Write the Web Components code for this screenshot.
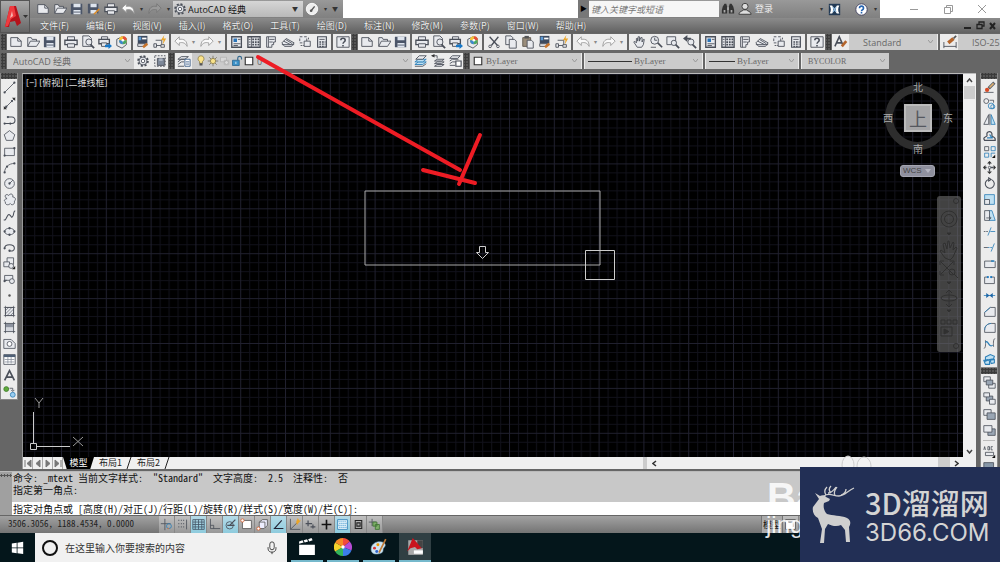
<!DOCTYPE html>
<html lang="zh-CN">
<head>
<meta charset="utf-8">
<title>AutoCAD 经典</title>
<style>
  body {
    margin: 0; height: 100vh; display: flex; flex-direction: column; position: relative;
    overflow: hidden; background: #666;
    font: 9px/12px "Open Sans", "Noto Sans CJK SC", sans-serif; color: #222;
  }
  .row { flex: none; display: flex; align-items: stretch; height: 16px; margin-top: 1px; overflow: hidden; }
  .row + .row { margin-top: 3px; }
  .row > * { flex: none; }
  .work { flex: 1; display: flex; margin-top: 4px; min-height: 0; }
  .left, .right { display: flex; flex-direction: column; }
  .left { width: 18px; }
  .right { width: 18px; margin: 0 2px 0 4px; overflow: hidden; }
  .view { flex: 1; margin-left: 4px; min-width: 0; display: flex; flex-direction: column; border-top: 1px solid #bbb; border-left: 1px solid #999; }
</style>
</head>
<body>
<cad-header></cad-header>

<div class="row">
  <cad-toolbar items="new open save | print preview plot publish | match block | undo v redo v | props center palettes sheet markup calc | help"></cad-toolbar>
  <cad-toolbar items="new open save | print preview plot publish | cut copy paste match block | undo v redo v | pan zoomrt zoomwin zoomprev | props center palettes sheet markup calc | help"></cad-toolbar>
  <cad-toolbar items="textstyle"></cad-toolbar>
  <cad-select label="文字样式" value="Standard" size="88" pad="12"></cad-select>
  <cad-toolbar plain items="| dimstyle"></cad-toolbar>
  <cad-select label="标注样式" value="ISO-25" size="88" pad="12"></cad-select>
</div>

<div class="row">
  <cad-toolbar items=""></cad-toolbar>
  <cad-select label="工作空间" value="AutoCAD 经典" size="127" pad="4"></cad-select>
  <cad-toolbar plain items="gear wsave"></cad-toolbar>
  <cad-toolbar items="layers"></cad-toolbar>
  <cad-select label="图层" value="0" size="220" pad="3"><cad-icon name="bulb"></cad-icon><cad-icon name="sun"></cad-icon><cad-icon name="freeze"></cad-icon><cad-icon name="lock"></cad-icon><cad-icon name="swatch"></cad-icon></cad-select>
  <cad-toolbar plain items="layer1 layer2 layer3"></cad-toolbar>
  <cad-toolbar items=""></cad-toolbar>
  <cad-select serif label="颜色" value="ByLayer" size="111" pad="2"><cad-icon name="swatch"></cad-icon></cad-select>
  <cad-toolbar plain items="|"></cad-toolbar>
  <cad-select serif label="线型" value="ByLayer" size="117" pad="3"><cad-icon name="line44"></cad-icon></cad-select>
  <cad-toolbar plain items="|"></cad-toolbar>
  <cad-select serif label="线宽" value="ByLayer" size="92" pad="3"><cad-icon name="line26"></cad-icon></cad-select>
  <cad-toolbar plain items="|"></cad-toolbar>
  <cad-select serif small label="打印样式" value="BYCOLOR" size="87" pad="4"></cad-select>
</div>

<div class="work">
  <div class="left">
    <cad-palette items="line xline pline polygon rect arc circle cloud spline ellipse earc insert mkblock point hatch gradient region table mtext addsel"></cad-palette>
  </div>
  <div class="view">
    <cad-viewport></cad-viewport>
    <cad-tabs></cad-tabs>
  </div>
  <div class="right">
    <cad-palette items="erase copyo mirror offset array move rotate scale stretch trim extend breakp break join chamfer fillet blend explode"></cad-palette>
    <cad-palette items="front back above under - textfront hatchback"></cad-palette>
  </div>
</div>

<cad-command></cad-command>
<cad-status></cad-status>
<win-taskbar></win-taskbar>
<red-arrow></red-arrow>
<site-mark></site-mark>

<script>
const K = 'stroke="#4a4f59" fill="none"';
const P = 'stroke="#4a4f59" fill="#e8eaee"';
const B = 'stroke="#2c7fb8" fill="none"';
const BF = 'stroke="#2c7fb8" fill="#bfe0f2"';
const node = (x, y, c = '#4a4f59') => `<circle cx="${x}" cy="${y}" r="1.4" fill="${c}"/>`;
const ICONS = {
  new: `<path ${P} d="M2 3h8l4 4v6H2z"/><path ${K} d="M10 3v4h4"/>`,
  open: `<path ${P} d="M2 13V3h4l1 2h5v2"/><path ${P} d="M2 13l3-6h11l-4 6z"/>`,
  save: `<path fill="#4b5568" d="M1 2h13v12H1z"/><path fill="#dfe5ee" d="M4 2h8v4H4zM4 9h8v5H4z"/><path stroke="#4b5568" d="M4 11.500h8"/>`,
  saveas: `<path fill="#4b5568" d="M1 2h12v11H1z"/><path fill="#dfe5ee" d="M4 2h7v4H4zM4 9h7v4H4z"/><path stroke="#d98b2b" stroke-width="2" d="M8 14l6-6"/>`,
  print: `<path ${P} d="M4 2h8v4H4z"/><path ${P} stroke-width="1.500" d="M1 6h14v5H1z"/><path ${P} d="M4 10h8v4H4z"/>`,
  preview: `<path ${P} d="M2 1h7l3 3v9H2z"/><circle cx="9" cy="8" r="3.500" ${P}/><path ${K} stroke-width="2" d="M11 11l4 4"/>`,
  plot: `<path ${P} d="M4 2h7v3H4z"/><path ${P} stroke-width="1.500" d="M1 5h12v5H1z"/><path ${P} d="M4 9h6v4H4z"/><path fill="#1878c8" d="M8 11h4V9l4 3.500L12 16v-2H8z"/>`,
  publish: `<path ${P} d="M2 5l6-3 5 2v7l-5 4-6-3z"/><circle cx="9" cy="6" r="4.500" fill="#f4c63a"/><path fill="#e2503e" d="M9 6V1.500A4.500 4.500 0 0 1 13.500 6z"/><path fill="#48a868" d="M9 6h4.500A4.500 4.500 0 0 1 9 10.500z"/><path fill="#3a87cf" d="M9 6v4.500A4.500 4.500 0 0 1 4.500 6z"/><circle cx="9" cy="6" r="1.500" fill="#fff"/>`,
  match: `<path fill="#3d4a5e" d="M2 1h11v9H2z"/><path fill="#fff" d="M7 3h5v2H7z"/><path fill="#5d9bd5" d="M3 2h3v4H3z"/><path ${P} d="M2 10h8v3H2z"/><path stroke="#c8742c" stroke-width="3" d="M8 14l5-4"/>`,
  block: `<path ${K} d="M3 6h7v5M1 12h9"/><path ${P} d="M1 10h3v4H1zM9 11h4v3H9z"/><path fill="#eaa52a" d="M13 0L9 6h3l-1 5 4-7h-3z"/>`,
  undo: `<path stroke="#999" fill="#fafafa" d="M1 7l5-5v3c6-1 9 2 9 8-2-4-5-5-9-4v3z"/>`,
  redo: `<path stroke="#999" fill="#fafafa" d="M15 7l-5-5v3C4 4 1 7 1 13c2-4 5-5 9-4v3z"/>`,
  redodim: `<path stroke="#777" fill="#999" d="M15 7l-5-5v3C4 4 1 7 1 13c2-4 5-5 9-4v3z"/>`,
  props: `<path ${P} stroke-width="1.500" d="M2 2h11v12H2z"/><path fill="#2a74b8" d="M4 4h4v4H4z"/><path ${K} d="M9 5h3M4 10h8M4 12h5"/>`,
  center: `<path ${P} stroke-width="1.500" d="M1 2h14v12H1z"/><path ${K} stroke-dasharray="2 1" stroke-width="2" d="M6 5h8M6 8h8M6 11h8"/><path ${K} d="M5 2v12M2 5h2M2 8h2M2 11h2"/>`,
  palettes: `<path ${P} d="M3 2h10v6h-2v3H9v3H3z"/><path ${K} d="M5 2v12M6 5h6M6 8h4"/>`,
  sheet: `<path ${P} d="M1 9l5-5 9 5-3 4H4z"/><path ${K} d="M3 7l8 4M5 5l8 5M1 11h14"/>`,
  markup: `<path ${P} stroke-dasharray="3 2" d="M2 2h8v7H2z"/><path ${P} d="M7 7h7v6H7z"/><path ${K} stroke-dasharray="2 1" d="M3 12h4M12 3v3"/>`,
  calc: `<path ${P} stroke-width="1.300" d="M3 2h10v12H3z"/><path ${K} d="M5 5h6"/><path ${K} stroke-width="1.500" stroke-dasharray="2 1" d="M5 8h7M5 10.500h7M5 13h7"/>`,
  help: `<path ${P} d="M1 2h14v12H1z"/><path ${K} stroke-width="1.800" d="M5.500 6c0-3 5-3 5 0 0 2-2.500 2-2.500 4M8 11.500v1.500"/>`,
  cut: `<path ${K} stroke-width="1.500" d="M3 2l9 10M13 2L5 12"/><circle cx="3.500" cy="13" r="1.500" ${K}/><circle cx="12.500" cy="13" r="1.500" ${K}/>`,
  copy: `<path ${P} d="M2 1h6l2 2v8H2z"/><path ${P} d="M6 5h6l2 2v8H6z"/>`,
  paste: `<path fill="#9a8d7b" stroke="#5d564c" d="M2 3h9v10H2z"/><path fill="#555" d="M4 1h5v3H4z"/><path ${P} d="M7 6h5l2 2v7H7z"/>`,
  pan: `<path ${P} d="M6 14L2 8l1-1 2 2V4h1.500v3L7 2h1.500v5L10 3h1.500v5L13 5h1l-1 6-2 3z"/>`,
  zoomrt: `<circle cx="6.500" cy="6" r="4.500" ${P}/><path ${K} stroke-width="2" d="M10 9l5 5"/><path ${K} d="M6.500 3v3h3M2 14h6"/>`,
  zoomwin: `<path ${P} d="M1 2h10v9H1z"/><circle cx="9" cy="9" r="3" ${P}/><path ${K} stroke-width="2" d="M11 11l4 4"/>`,
  zoomprev: `<circle cx="9" cy="8" r="3.500" ${P}/><path ${K} stroke-width="2" d="M11 11l4 4"/><path fill="#4a4f59" d="M0 4l5-4v3h4v2H5v3z"/>`,
  textstyle: `<path ${K} stroke="#333" stroke-width="1.800" d="M1 13L6 2l4 9M3 9h6"/><path stroke="#b4652c" stroke-width="3" d="M9 13l5-6"/>`,
  dimstyle: `<path ${K} d="M1 8v7M15 8v7M1 13h14"/><path stroke="#b4652c" stroke-width="4" d="M6 9l6-5"/><path stroke="#555" stroke-width="2" d="M12 4l3-3"/>`,
  gear: `<circle cx="8" cy="8" r="5.500" ${K} stroke-width="2.200" stroke-dasharray="2.300 2"/><circle cx="8" cy="8" r="4.500" ${P}/><circle cx="8" cy="8" r="2" stroke="#4a4f59" fill="#fff"/>`,
  wsave: `<path ${K} stroke-dasharray="2 1.500" d="M2 2h12v12H2z"/><path fill="#7d8899" stroke="#4a4f59" d="M5 5h8v8H5z"/><path fill="#aab2c0" d="M7 5h4v3H7z"/>`,
  layers: `<path ${P} d="M1 6l4-3h8l-4 3zM1 9l4-3h5M1 12l4-3h3M1 14h7"/><path fill="#fff" stroke="#3a5d88" d="M9 6h6v8H9z"/><path stroke="#3a5d88" d="M10 9h4M10 11.500h4"/>`,
  bulb: `<path fill="#fbe38a" stroke="#8a7a43" d="M8 1a4 4 0 0 1 2 7.500V11H6V8.500A4 4 0 0 1 8 1z"/><path fill="#555" d="M6 11h4v3H6z"/>`,
  sun: `<path stroke="#6f6a55" d="M8 1v14M1 8h14M3 3l10 10M13 3L3 13"/><circle cx="8" cy="8" r="3.500" fill="#f8e28a" stroke="#8a7a43"/>`,
  freeze: `<path stroke="#b0b0b0" fill="#d8d8d8" d="M2 3h8v6H2zM7 7h6v6H7z"/><circle cx="10" cy="10" r="2.500" fill="#ddd" stroke="#aaa"/>`,
  lock: `<path fill="#3c92c9" stroke="#24618c" d="M2 7h9v7H2z"/><path fill="none" stroke="#34688d" stroke-width="1.500" d="M9 7V4c0-3 5-3 5 0v2"/><path stroke="#fff" d="M6.500 9v3"/>`,
  swatch: `<path fill="#fff" stroke="#333" stroke-width="1.500" d="M3 3h10v10H3z"/>`,
  layer1: `<path ${BF} d="M1 12l4-3h9l-4 3z"/><path ${BF} d="M1 9l4-3h9l-4 3z"/><path ${P} d="M2 6l4-4h8l-4 4z"/><path ${K} d="M1 14h9l4-3"/>`,
  layer2: `<path ${P} d="M4 8l3-2h8l-3 2zM4 11l3-2h8l-3 2zM4 14l3-2h8l-3 2z"/><path ${K} d="M1 2h6v3"/><path fill="#333" d="M0 2l4-2v4z"/>`,
  layer3: `<path ${P} d="M2 5l3-3h9l-3 3zM2 8l3-2h7M2 11l3-2h4M2 13h6"/><path fill="#fff" stroke="#4a4f59" stroke-width="1.300" d="M9 8h6v6H9z"/>`,
  line: `<path ${K} d="M2 14L14 2"/>${node(2,14)}${node(14,2)}`,
  xline: `<path ${K} d="M1 15L15 1"/>${node(4,12)}${node(11,5)}<path fill="#333" d="M15 1v4l-4-4zM1 15v-4l4 4z"/>`,
  pline: `<path ${K} stroke-width="1.300" d="M2 13h9c5 0 5-8 0-8H6"/>${node(2,13)}${node(9,13)}${node(6,5)}`,
  polygon: `<path ${P} d="M8 2l6.500 5-2.500 7H4L1.500 7z"/>`,
  rect: `<path ${P} d="M2 4h12v9H2z"/>${node(2,13)}${node(14,4)}`,
  arc: `<path ${K} d="M2 14C2 8 7 3 14 3"/>${node(2,14)}${node(5,7)}${node(14,3)}`,
  circle: `<circle cx="8" cy="8" r="6" ${P}/><path ${K} d="M8 8l4-4"/>${node(8,8)}`,
  cloud: `<path ${P} d="M5 7C0 4 4 0 7 3c2-3 6-2 5 2 4 0 4 4 2 5 1 4-3 6-5 3-3 3-7 1-6-2-3-2 0-4 2-4z"/>`,
  spline: `<path ${K} stroke-width="1.300" d="M1 13C4 16 5 5 8 7s2 5 4 2 0-5 3-7"/>`,
  ellipse: `<ellipse cx="8" cy="8" rx="6" ry="4" ${P}/>${node(2,8)}${node(14,8)}${node(8,4)}${node(8,12)}`,
  earc: `<path ${K} stroke-width="1.300" d="M2 9c0-6 12-6 12 0 0 3-3 4-6 3"/>${node(2,9)}${node(8,12)}`,
  insert: `<path ${P} d="M5 1h8v8H5z"/><path ${P} d="M1 6h7v6H1z"/><circle cx="10" cy="11" r="3" ${P}/><path fill="#222" d="M15 11v4h-4z"/>`,
  mkblock: `<path ${P} d="M2 3h10v6H2zM1 9h4"/><circle cx="11" cy="10" r="3" ${P}/>${node(2,10)}`,
  point: `<circle cx="8" cy="8" r="1.500" fill="#555"/>`,
  hatch: `<path ${P} d="M3 3h10v10H3z"/><path ${K} stroke-width=".800" d="M3 7l4-4M3 11l8-8M5 13l8-8M9 13l4-4M1 3h14M1 13h14M3 1v14M13 1v14"/>`,
  gradient: `<path fill="#8c929e" d="M3 3h10v5H3z"/><path fill="#d5d8de" d="M3 8h10v5H3z"/><path ${K} d="M1 3h14M1 13h14M3 1v14M13 1v14"/>`,
  region: `<path ${P} d="M1 3h9l5 5v6H1z"/><circle cx="8" cy="8.500" r="3" stroke="#4a4f59" fill="#fff"/>`,
  table: `<path fill="#fff" stroke="#4a4f59" d="M1 2h14v12H1z"/><path fill="#4f6076" d="M1 2h14v3H1z"/><path stroke="#8b929e" d="M2 8h12M2 11h12M6 5v8M10 5v8"/>`,
  mtext: `<path ${K} stroke="#333" stroke-width="2" d="M2 14L8 2l6 12M4 10h8"/>`,
  addsel: `<circle cx="4" cy="5" r="3" fill="#5faa3c" stroke="#3a7a22"/><circle cx="12" cy="12" r="3" fill="#9bcdf0" stroke="#2c7fb8"/><path ${K} d="M8 4h4v3M10 6l2 2 2-2"/>`,
  erase: `<path ${K} d="M1 14h12"/><path stroke="#5a606b" stroke-width="4" d="M7 9l7-7"/><path stroke="#e0b070" stroke-width="2" d="M8 8l5-5"/><circle cx="5" cy="11" r="2.600" fill="#d84b26"/>`,
  copyo: `<circle cx="4" cy="5" r="3" ${K}/><circle cx="10" cy="11" r="3.500" ${B}/><circle cx="12" cy="12" r="2.500" ${B}/><path ${K} d="M8 4h5v3"/>`,
  mirror: `<path ${P} d="M7 2v12H1z"/><path ${BF} d="M10 2v12h5z"/><path ${K} d="M8.500 1v14"/>`,
  offset: `<path ${K} stroke-width="1.500" d="M2 14h13v-2c-1-3-4-2-4-4 1-7-8-6-6 0 0 2-4 1-4 4z"/><path ${B} stroke-width="1.500" d="M5 11h7c-3-1-3-4-4-4"/>`,
  array: `<path ${K} d="M2 2h5v5H2z"/><path ${B} d="M10 2h5v5h-5zM2 10h5v5H2zM15 10h-5v5"/><path fill="#111" d="M15 12v4h-4z"/>`,
  move: `<path ${K} stroke-width="1.600" stroke-dasharray="3.500 5" d="M8 1v15M1 8h15"/><path fill="#333" d="M8 0l3 3H5zM8 16l-3-3h6zM0 8l3-3v6zM16 8l-3 3V5z"/><circle cx="8" cy="8" r="1.500" ${K}/>`,
  rotate: `<path ${K} stroke-width="1.300" d="M7 3a5.500 5.500 0 1 0 4 .500M7 1v4l3-2z"/>`,
  scale: `<path ${BF} d="M2 2h12v12H2z"/><path ${P} d="M2 8h6v6H2z"/>`,
  stretch: `<path ${BF} d="M7 2h4l4 12H7z"/><path ${P} d="M2 2h6v12H2z"/><path ${K} d="M4 11h5M8 9l2 2-2 2"/>`,
  trim: `<path ${K} stroke-dasharray="2 1" d="M1 8h5"/><path ${B} d="M6 13l4-10M9 8h6"/>`,
  extend: `<path ${K} d="M1 8h5"/><path ${B} d="M10 13l4-10"/><path ${B} stroke-dasharray="2 1" d="M6 8h6"/>`,
  breakp: `<path ${P} d="M12 5H2v8h13V5"/><path ${B} stroke-width="2" d="M10 5h4"/>`,
  break: `<path ${P} d="M6 5H2v8h12V5h-4"/>${node(6,5,'#1c78c0')}${node(10,5,'#1c78c0')}`,
  join: `<path ${B} d="M1 8h14"/><path fill="#1c66a8" d="M8 8L4 5v6zM8 8l4-3v6z"/>`,
  chamfer: `<path ${P} d="M2 14V9l7-6h6v11z"/><path ${B} d="M2 9l7-6"/>`,
  fillet: `<path ${P} d="M2 14v-3c0-5 4-8 8-8h5v11z"/><path ${B} d="M2 11c0-5 4-8 8-8"/>`,
  blend: `<path ${K} d="M1 14c3 0 2-8 2-10M15 2c-3 0-2 8-2 10"/><path ${B} stroke-width="1.500" d="M3 7c3-5 4 7 9 3"/>`,
  explode: `<path ${BF} stroke-width="1.300" d="M3 5l6-3 5 2-1 3-5 1-5 2zM1 9l5-1 2 2v4H3zM9 9l5-1v4l-4 1z"/>`,
  front: `<path ${P} d="M1 1h8v6H1zM7 9h8v6H7z"/><path fill="#9aa6b4" stroke="#4a4f59" d="M4 5h8v6H4z"/>`,
  back: `<path fill="#9aa6b4" stroke="#4a4f59" d="M4 5h8v6H4z"/><path ${P} d="M1 1h7v5H1zM8 9h7v6H8z"/>`,
  above: `<path ${P} d="M1 2h9v7H1z"/><path fill="#9aa6b4" stroke="#4a4f59" d="M5 6h10v8H5z"/>`,
  under: `<path fill="#9aa6b4" stroke="#4a4f59" d="M6 6h9v8H6z"/><path ${P} d="M1 2h10v8H1z"/>`,
  textfront: `<path ${K} stroke="#222" d="M1 6l1-4 1 4M6 2h2v4H6zM12 2h-2v4h2"/><path ${P} d="M3 9h10v4H3z"/><path fill="#111" d="M15 12v4h-4z"/>`,
  hatchback: `<path fill="#8797a8" stroke="#4a4f59" d="M1 2h12v10H1z"/>`,
  find: `<path fill="#333" d="M2 5l2-3h2l1 3v8H1V9zM14 5l-2-3h-2L9 5v8h6V9z"/><path fill="#aaa" d="M3 9h2v3H3zM11 9h2v3h-2zM7 6h2v3H7z"/>`,
  user: `<circle cx="8" cy="5" r="3.500" fill="#ddd" stroke="#333"/><path fill="#ddd" stroke="#333" d="M1 14c1-4 4-3 5-5h4c1 2 4 1 5 5z"/>`,
  exchange: `<path fill="#223a55" d="M1 1h14v14H1z"/><path fill="#fff" d="M2 3h3c2 2 2 8 0 10H2c2-3 2-7 0-10zM14 3h-3c-2 2-2 8 0 10h3c-2-3-2-7 0-10z"/><path stroke="#8fb9dd" stroke-width="1.500" d="M6 5l4 6M10 5l-4 6"/>`,
  qhelp: `<circle cx="8" cy="8" r="7" fill="#fff" stroke="#335"/><path fill="none" stroke="#2463b0" stroke-width="2" d="M5.500 6.500c0-3.500 5-3.500 5 0 0 2-2.500 1.500-2.500 3.500M8 11.200v1.800"/>`,
  dial: `<circle cx="8" cy="8" r="6.500" fill="#eee" stroke="#fff"/><path stroke="#555" stroke-width="1.500" d="M7 10l4-5"/><circle cx="7" cy="10" r="1.500" fill="#555"/>`,
  s1: `<path ${K} d="M6 1v14M1 7h12"/><circle cx="11" cy="10" r="3" ${B}/><path stroke="#e07030" d="M9 13h2"/>`,
  s2: `<path ${K} stroke-dasharray="1 2" stroke-width="1.500" d="M3 3h8M3 7h8M3 11h8"/><path ${K} d="M13 2v12"/>`,
  s3: `<path stroke="#445566" fill="none" d="M1 2h14v12H1zM1 5h14M1 8h14M1 11h14M4 2v12M8 2v12M12 2v12"/>`,
  s4: `<path ${K} d="M3 1v12h12M3 9h4v4"/>`,
  s5: `<circle cx="7" cy="9" r="4.500" ${K}/><path ${K} stroke-width="1.500" d="M7 9l7-7M4 9h9"/>`,
  s6: `<path fill="#fff" stroke="#555" d="M3 3h11v10H3z"/><circle cx="3" cy="3" r="2" fill="#fff" stroke="#d65f2d"/>`,
  s7: `<path fill="#eef" stroke="#555" d="M4 5l4-3h6v7l-4 4H4zM4 5h7v7"/><circle cx="3" cy="13" r="2" fill="#fff" stroke="#d65f2d"/>`,
  s8: `<path stroke="#223" fill="none" stroke-width="1.300" d="M12 3L3 13h11"/>`,
  s9: `<path ${K} d="M3 1v13h12M3 14l8-8"/><path fill="#eaa52a" d="M12 0l2 3 2 0-3 3-2 3-1-4z"/>`,
  s10: `<path ${K} stroke="#222" stroke-width="1.500" d="M5 3v7M2 7h8M8 11h6M11 8v5"/>`,
  s11: `<path stroke="#111" stroke-width="2" d="M8 2v12M2 8h12"/>`,
  s12: `<path fill="#eaf6fc" stroke="#2c7fb8" d="M2 2h12v12H2z"/><path stroke="#62a9d6" stroke-dasharray="1.500 1" stroke-width="1.500" d="M3 4h10M4 6.500h10M3 9h10M4 11.500h10"/>`,
  s13: `<path fill="none" stroke="#222" stroke-width="1.300" d="M4 3h8v10H4zM6 6h4v4H6z"/>`,
  s14: `<path ${K} d="M5 1v9M1 5h9"/><path fill="#7fb069" stroke="#3d7032" d="M6 5h5v5H6zM9 8h5v6H9z"/>`,
  s15: `<path fill="#fff" stroke="#444" d="M2 2h12v12H2z"/><path ${K} d="M5 5h6v6"/>`,
  win: `<path fill="#fff" d="M1 3l6-1v6H1zM8 2l7-1v7H8zM1 9h6v6l-6-1zM8 9h7v7l-7-1z"/>`,
  mic: `<rect x="5.500" y="1" width="5" height="9" rx="2.500" fill="none" stroke="#333"/><path fill="none" stroke="#333" d="M3.500 7v2c0 5 9 5 9 0V7M8 12.500V15"/>`,
  clap: `<path fill="#fff" d="M1 6h14v9H1zM1 3l3-1 1 2-4 1zM5 2l3-1 1 2-3 1zM9 1l3-1 1 2-3 1z"/>`,
  wheel: `<path fill="#f14b3c" d="M8 8V0a8 8 0 0 1 6 3z"/><path fill="#b84bd6" d="M8 8l6-5a8 8 0 0 1 1.500 8z"/><path fill="#3b7dea" d="M8 8l7.500 3A8 8 0 0 1 8 16z"/><path fill="#33b45a" d="M8 8v8a8 8 0 0 1-7-4z"/><path fill="#f5d32c" d="M8 8l-7 4a8 8 0 0 1 0-8z"/><path fill="#f58a26" d="M8 8L1 4a8 8 0 0 1 7-4z"/><circle cx="8" cy="8" r="1.500" fill="#fff"/>`,
  paint: `<path fill="#cfe5f2" stroke="#7aa5c0" stroke-width=".500" d="M1 10c0-6 7-8 11-6 3 2 1 4 0 5s1 4-4 5-7-1-7-4z"/><circle cx="4" cy="9" r="1.300" fill="#d33"/><circle cx="7" cy="6" r="1.300" fill="#e90"/><circle cx="6" cy="12" r="1.300" fill="#36c"/><path stroke="#c07a35" stroke-width="1.500" d="M8 13l6-12"/>`,
  acad: `<path fill="#aaa" d="M2 2h13v13H2z"/><path fill="#444" d="M10 2h5v7h-5z"/><path fill="#c9151e" d="M1 12L6 0l8 9-4 1-2-2-4 1z"/><path fill="#fff" d="M7 11h8v3H7z"/>`
};

const svg = (name, w, h = w) => {
  if (name.startsWith('line') && name.length > 4) {
    const n = name.slice(4);
    return `<svg width="${n}" height="12" viewBox="0 0 ${n} 12" aria-hidden="true"><path stroke="#333" d="M0 6.500h${n}"/></svg>`;
  }
  return `<svg width="${w}" height="${h}" viewBox="0 0 16 16" aria-hidden="true">${ICONS[name] || ''}</svg>`;
};

function define(tag, render) {
  customElements.define(tag, class extends HTMLElement {
    connectedCallback() {
      if (this.shadowRoot) return;
      const t = document.createElement('template');
      t.innerHTML = render(this);
      this.attachShadow({ mode: 'open' }).append(t.content.cloneNode(true));
    }
  });
}

const RESET = `
  button { all: unset; box-sizing: border-box; display: flex; align-items: center; justify-content: center; }
  svg { display: block; flex: none; }
  *, *::before { box-sizing: border-box; }`;

define('cad-icon', el => `<style>:host{display:block;flex:none}${RESET}</style>${svg(el.getAttribute('name'), +(el.getAttribute('size') || 12))}`);

define('cad-toolbar', el => {
  const items = (el.getAttribute('items') || '').split(' ').filter(Boolean);
  return `<style>
    :host { display: flex; background: #ececec; }
    ${RESET}
    button { width: 17px; }
    .v { width: 9px; font-size: 6px; color: #888; }
    .sep { width: 4px; border-left: 1px solid #ececec; border-right: 1px solid #ececec; background: #666; }
    .grip { width: 7px; background: #555; border: solid #666; border-width: 0 1px; background-image: radial-gradient(#3c3c3c 50%, transparent 50%); background-size: 3px 3px; }
  </style>${el.hasAttribute('plain') ? '' : '<div class="grip"></div>'}` +
  items.map(n => n === '|' ? '<div class="sep"></div>' : n === 'v' ? '<button class="v" aria-label="更多">▾</button>'
    : `<button aria-label="${n}">${svg(n, 14)}</button>`).join('');
});

define('cad-select', el => {
  const v = el.getAttribute('value'), s = el.hasAttribute('serif');
  const f = s ? (el.hasAttribute('small') ? '8px "Liberation Serif"' : '9px "Liberation Serif"') : '9px "Open Sans"';
  return `<style>
    :host { display: flex; align-items: center; background: #cbcbcb; width: ${el.getAttribute('size')}px; padding: 0 4px 0 ${el.getAttribute('pad')}px; box-sizing: border-box; overflow: hidden; }
    ${RESET}
    select { appearance: none; border: 0; background: none; flex: 1; min-width: 0; padding: 0 0 0 2px; margin: 0; color: #686868; font: ${f}, "Noto Sans CJK SC", sans-serif; }
  </style><slot></slot><select aria-label="${el.getAttribute('label')}"><option>${v}</option></select>
  <svg width="5" height="4" viewBox="0 0 5 4"><path d="M0 0l2.500 3L5 0" fill="none" stroke="#999"/></svg>`;
});

define('cad-header', () => {
  const menus = ['文件(F)', '编辑(E)', '视图(V)', '插入(I)', '格式(O)', '工具(T)', '绘图(D)', '标注(N)', '修改(M)', '参数(P)', '窗口(W)', '帮助(H)'];
  const q = n => `<button class="q" aria-label="${n}">${svg(n, 14)}</button>`;
  return `<style>
    :host { flex: none; display: grid; grid-template: 18px 15px / 30px minmax(0, 1fr); background: linear-gradient(#909090, #787878 54%, #8a8a8a 56%, #616161); }
    ${RESET}
    .app { grid-row: 1 / 3; background: linear-gradient(#aaa, #666); border: 1px solid #555; }
    .title { display: flex; align-items: stretch; background: #fff; }
    .bar { display: flex; align-items: center; background: linear-gradient(#999, #808080); flex: none; }
    .qat { width: 313px; padding-left: 4px; }
    .q { width: 17px; height: 16px; flex: none; }
    .a { width: 10px; font-size: 6px; color: #333; flex: none; }
    .ws { width: 130px; height: 16px; display: flex; align-items: center; background: linear-gradient(#d6d6d6, #b9b9b9); padding: 0 3px 0 0; flex: none; }
    .ws select { appearance: none; border: 0; background: none; padding: 0; margin: 0 auto 0 1px; color: #111; font: 9px "Open Sans", "Noto Sans CJK SC", sans-serif; width: 102px; }
    .info { width: 302px; margin-left: 235px; }
    .play { width: 11px; height: 18px; background: #777; font-size: 7px; color: #000; }
    input { width: 130px; height: 16px; border: 0; border-radius: 0; padding: 0 2px; background: #f6f6f6; font: italic 9px "Noto Sans CJK SC", sans-serif; flex: none; }
    input::placeholder { color: #777; opacity: 1; }
    .login { color: #eee; margin: 0 auto 0 2px; }
    .wc { margin-left: auto; display: flex; padding-right: 1px; }
    .wc button { width: 34px; }
    nav { display: flex; align-items: center; gap: 17px; padding-left: 10px; font: 9px/14px "Noto Sans CJK SC", sans-serif; color: #eee; text-shadow: 0 0 1px #333; }
    nav a { color: inherit; text-decoration: none; white-space: nowrap; }
    .mdi { margin-left: auto; display: flex; padding-right: 2px; }
    .mdi button { width: 12px; }
  </style>
  <button class="app" aria-label="应用程序菜单"><svg width="28" height="30" viewBox="0 0 28 30"><path fill="#b5121b" d="M4 25L9 4h6l5 17-4 3-2-5-5 1-1 5z"/><path fill="#ef3b3f" d="M9 4h4l2 10-5 3-3 7-3 1z"/><path fill="#f6b5b0" d="M11 9l1 5-3 2z"/><path fill="#333" d="M22 13h5l-2.500 3z"/></svg></button>
  <div class="title">
    <div class="bar qat">${['new', 'open', 'save', 'saveas', 'print', 'undo'].map(q).join('')}<button class="a">▾</button>${q('redodim')}<button class="a">▾</button>
      <div class="ws">${svg('gear', 14)}<select aria-label="工作空间"><option>AutoCAD 经典</option></select><button class="a">▼</button></div>
      ${q('dial')}<button class="a">▾</button><button class="a">▼</button></div>
    <div class="bar info"><button class="play" aria-label="展开">▶</button><input aria-label="搜索" placeholder="键入关键字或短语">
      <button class="q">${svg('find', 14)}</button><button class="q">${svg('user', 14)}</button><span class="login">登录</span><button class="a">▾</button><button class="q">${svg('exchange', 13)}</button><button class="a"></button><button class="q">${svg('qhelp', 13)}</button><button class="a">▾</button></div>
    <div class="wc">
      <button aria-label="最小化"><svg width="8" height="8"><path d="M0 4.500h8" stroke="#999"/></svg></button>
      <button aria-label="还原"><svg width="9" height="9"><path d="M.500 2.500h6v6h-6zM2.500 2V.500h6v6H7" fill="none" stroke="#999"/></svg></button>
      <button aria-label="关闭"><svg width="8" height="8"><path d="M0 0l8 8M8 0L0 8" stroke="#999"/></svg></button>
    </div>
  </div>
  <nav>${menus.map(m => `<a href="#">${m}</a>`).join('')}
    <div class="mdi">
      <button aria-label="最小化窗口"><svg width="8" height="8"><path d="M0 6h7" stroke="#222" stroke-width="2"/></svg></button>
      <button aria-label="还原窗口"><svg width="9" height="9"><path d="M1 3.500h5v4H1zM3 3V1h5v4H6" fill="none" stroke="#222" stroke-width="1.300"/></svg></button>
      <button aria-label="关闭窗口"><svg width="7" height="8"><path d="M1 1l5 6M6 1L1 7" stroke="#222" stroke-width="2"/></svg></button>
    </div></nav>`;
});

define('cad-palette', el => `<style>
    :host { display: block; flex: none; background: #ececec; border: 1px solid #888; border-top: 0; }
    ${RESET}
    .grip { height: 6px; background: #555; background-image: radial-gradient(#3a3a3a 50%, transparent 50%); background-size: 3px 3px; }
    button { width: 16px; height: 16px; }
    hr { border: 0; border-top: 1px solid #bbb; margin: 2px; }
  </style><div class="grip"></div>` +
  el.getAttribute('items').split(' ').map(n => n === '-' ? '<hr>' : `<button aria-label="${n}">${svg(n, 13)}</button>`).join(''));

define('cad-viewport', () => `<style>
    :host { flex: 1; min-height: 0; display: flex; background: #000; }
    ${RESET}
    .area { flex: 1; position: relative; overflow: hidden; min-width: 0; }
    .area > svg { position: absolute; inset: 0; width: 100%; height: 100%; }
    .label { position: absolute; left: 3px; top: 3px; color: #ddd; font: 9px/12px "Open Sans", "Noto Sans CJK SC", sans-serif; white-space: pre; }
    .cube { position: absolute; right: 8px; top: 5px; width: 74px; height: 78px; display: grid; grid-template: 16px 46px 16px / 14px 46px 14px; place-items: center; color: #aaa; font: 10px/14px "Noto Sans CJK SC", sans-serif; }
    .ring { position: absolute; left: 4px; top: 6px; width: 65px; height: 65px; border: 8px solid #2d2d2d; border-radius: 50%; }
    .cube span { position: relative; }
    .n { grid-area: 1 / 2; } .w { grid-area: 2 / 1; } .e { grid-area: 2 / 3; } .s { grid-area: 3 / 2; }
    .cube .top { grid-area: 2 / 2; width: 28px; height: 28px; background: #a5a5a7; border: 2px solid #bbb; color: #55585f; font: 18px/24px "Noto Sans CJK SC", sans-serif; text-align: center; }
    .wcs { position: absolute; right: 28px; top: 91px; width: 35px; height: 12px; border-radius: 3px; background: #8f909e; border: 1px solid #a5a6b2; color: #444; font: 8px/10px "Liberation Sans", sans-serif; justify-content: flex-start; padding-left: 2px; gap: 3px; }
    .nav { position: absolute; right: 2px; top: 122px; width: 24px; height: 156px; background: rgba(110,110,110,.600); border-radius: 3px; }
    .sb { width: 13px; background: #f0f0f0; display: flex; flex-direction: column; align-items: center; }
    .sb button { height: 12px; width: 13px; }
    .thumb { width: 11px; height: 13px; background: #cdcdcd; margin-bottom: auto; }
  </style>
  <div class="area">
    <svg>
      <defs>
        <pattern id="g" width="44.800" height="44.900" patternUnits="userSpaceOnUse" x="38" y="44.500">
          <path d="M9.500 0v45M18.500 0v45M27.500 0v45M36.500 0v45M0 9.500h45M0 18.500h45M0 27.500h45M0 36.500h45" stroke="#11111a"/>
          <path d="M.500 0v45M0 .500h45" stroke="#20202e"/>
        </pattern>
      </defs>
      <rect width="100%" height="100%" fill="url(#g)"/>
      <g transform="translate(-23 -75)" fill="none" stroke="#ccc">
        <path stroke="#aaa" d="M365 192h235v74H365z"/>
        <path d="M585.500 251.500h29v29h-29z"/>
        <path d="M479.500 247.500h6v6h3l-6 6-6-6h3z"/>
        <path d="M33.500 413v31M37 447.500h33M30.500 444.500h6v6h-6z"/>
        <path stroke="#999" d="M35 399l4 5 4-5M39 404v5M73 438l10 9M83 438l-10 9"/>
      </g>
    </svg>
    <span class="label">[−] [俯视] [二维线框]</span>
    <div class="cube"><div class="ring"></div><span class="n">北</span><span class="w">西</span><span class="top">上</span><span class="e">东</span><span class="s">南</span></div>
    <button class="wcs">WCS<svg width="6" height="5"><path d="M0 0h6L3 4z" fill="#b5b6c2"/></svg></button>
    <div class="nav"><svg width="24" height="156" fill="none" stroke="#303030"><circle cx="19" cy="5" r="2.500"/><circle cx="12" cy="23" r="8"/><circle cx="12" cy="23" r="4.500"/><path fill="#303030" d="M10 37h4l-2 2zM10 86h4l-2 2zM10 114h4l-2 2z"/><path d="M8 62l-5-7 1-1 4 3-2-9 2-1 2 6 1-8h1l1 7 3-6 1 1-1 7 3-3 1 1-4 9-3 3zM4 66l12 12M16 66L4 78M3 69v-4h4M13 65h4v4M3 75v4h4"/><circle cx="15" cy="76" r="3"/><path d="M17 78l4 4"/><ellipse cx="12" cy="102" rx="8" ry="3"/><path d="M12 94v17M9 97l3-3 3 3M9 108l3 3 3-3M4 124h4v4H4zM10 124h4v4h-4zM16 124h4v4h-4zM4 131h11v9H4z"/><path fill="#303030" d="M7 133l5 2.500-5 2.500z"/><circle cx="19" cy="150" r="2.500"/></svg></div>
  </div>
  <div class="sb"><button aria-label="向上"><svg width="7" height="5"><path d="M1 4l2.500-3L6 4" fill="none" stroke="#444" stroke-width="1.500"/></svg></button><div class="thumb"></div><button aria-label="向下"><svg width="7" height="5"><path d="M1 1l2.500 3L6 1" fill="none" stroke="#444" stroke-width="1.500"/></svg></button></div>`);

define('cad-tabs', () => `<style>
    :host { flex: none; height: 12px; display: flex; background: #f0f0f0; }
    ${RESET}
    .nv { width: 10px; height: 12px; border-right: 1px solid #aaa; }
    .tab { height: 12px; font: 9px/12px "Noto Sans CJK SC", sans-serif; color: #222; padding: 0 4px 0 5px; white-space: nowrap; }
    .on { background: #000; color: #fff; clip-path: polygon(0 0, 100% 0, 88% 100%, 12% 100%); width: 31px; padding: 0; }
    .h { margin-left: auto; width: 333px; display: flex; align-items: center; border-left: 4px solid #ccc; padding: 0 17px 0 5px; }
    .th { width: 12px; height: 12px; background: #cdcdcd; margin: 0 4px 0 auto; }
  </style>
  ${['M2 1v7M8 1L4 4.500 8 8z', 'M7 1L3 4.500 7 8z', 'M3 1l4 3.500L3 8z', 'M2 1l4 3.500L2 8zM8 1v7'].map((d, i) => `<button class="nv" aria-label="翻页 ${i + 1}"><svg width="9" height="9"><path d="${d}" fill="#777" stroke="#777"/></svg></button>`).join('')}
  <button class="tab on">模型</button><button class="tab">布局1</button><svg width="6" height="12"><path d="M1 12L5 0" stroke="#222"/></svg><button class="tab">布局2</button><svg width="6" height="12"><path d="M1 12L5 0" stroke="#222"/></svg>
  <div class="h"><svg width="5" height="7"><path d="M4 1L1 3.500 4 6" fill="none" stroke="#333" stroke-width="1.500"/></svg><div class="th"></div><svg width="5" height="7"><path d="M1 1l3 2.500L1 6" fill="none" stroke="#333" stroke-width="1.500"/></svg></div>`);

define('cad-command', () => `<style>
    :host { flex: none; margin-top: 2px; height: 43px; display: flex; background: #a0a0a0; border-top: 1px solid #bbb; }
    ${RESET}
    .grip { width: 12px; flex: none; background: radial-gradient(#555 50%, transparent 50%) 0 2px / 3px 3px repeat-x; }
    .body { flex: 1; display: flex; flex-direction: column; min-width: 0; font: 10px/12px "Noto Sans Mono CJK SC", "Noto Sans CJK SC", monospace; color: #111; }
    .log { flex: 1; background: #c8c8c8; white-space: pre; padding-left: 1px; }
    p { margin: 0; }
    input { border: 0; padding: 0 1px; margin: 0; height: 13px; background: #fff; font: inherit; color: inherit; }
  </style><div class="grip"></div><div class="body"><div class="log"><p>命令: _mtext 当前文字样式:  "Standard"  文字高度:  2.5  注释性:  否</p><p>指定第一角点:</p></div><input aria-label="命令行" value="指定对角点或 [高度(H)/对正(J)/行距(L)/旋转(R)/样式(S)/宽度(W)/栏(C)]:"></div>`);

define('cad-status', () => `<style>
    :host { flex: none; height: 17px; border-top: 1px solid #666; display: flex; background: linear-gradient(#a2a2a2, #747474); }
    ${RESET}
    .xyz { width: 159px; padding-left: 8px; font: 9px/16px "Noto Sans Mono CJK SC", monospace; color: #222; white-space: pre; }
    .b { width: 16px; background: linear-gradient(#c0c0c0, #989898); border-right: 1px solid #888; }
    .on { background: linear-gradient(#b5dbe8, #8ecbdd); }
    .end { margin-left: auto; margin-right: 201px; display: flex; }
    .model { background: #aaa; padding: 0 1px; color: #111; font: 9px/16px "Noto Sans CJK SC", sans-serif; border-left: 1px solid #777; border-right: 1px solid #777; }
  </style><span class="xyz">3506.3056, 1188.4534, 0.0000</span>` +
  Array.from({ length: 14 }, (_, i) => `<button aria-label="状态 ${i + 1}" aria-pressed="${[3, 5, 8, 12].includes(i + 1)}" class="b ${[3, 5, 8, 12].includes(i + 1) ? 'on' : ''}">${svg('s' + (i + 1), 13)}</button>`).join('') +
  `<div class="end"><button class="model">模型</button><button class="b" aria-label="布局">${svg('s15', 13)}</button></div>`);

define('win-taskbar', () => `<style>
    :host { flex: none; height: 29px; display: flex; background: #04161b; }
    ${RESET}
    .start { width: 35px; }
    .search { width: 252px; display: flex; align-items: center; background: #f1f1f1; padding: 0 8px 0 7px; gap: 7px; }
    .search i { width: 16px; height: 16px; border: 2px solid #111; border-radius: 50%; flex: none; }
    input { flex: 1; min-width: 0; border: 0; background: none; padding: 0; font: 10px "Noto Sans CJK SC", sans-serif; }
    input::placeholder { color: #333; opacity: 1; }
    .t { width: 32px; margin-left: 4px; border-bottom: 2px solid #76b9cc; }
    .cur { background: #303f43; }
  </style><button class="start" aria-label="开始">${svg('win', 13)}</button>
  <label class="search"><i></i><input aria-label="搜索" placeholder="在这里输入你要搜索的内容">${svg('mic', 14)}</label>
  <button class="t" aria-label="电影">${svg('clap', 18)}</button><button class="t" aria-label="照片">${svg('wheel', 18)}</button><button class="t" aria-label="画图">${svg('paint', 18)}</button><button class="t cur" aria-label="AutoCAD">${svg('acad', 18)}</button>`);

define('red-arrow', () => `<style>:host{position:absolute;left:250px;top:50px;pointer-events:none}${RESET}</style>
  <svg width="240" height="150" viewBox="250 50 240 150" fill="none" stroke="#ed1c24" stroke-width="4" stroke-linecap="round"><path d="M258 57L460 170M480 135L459 184M423 170L475 183"/></svg>`);

define('site-mark', () => `<style>
    :host { position: absolute; right: 0; bottom: 0; }
    ${RESET}
    .card { position: relative; width: 200px; height: 95px; background: #222f55; color: #d4d4d4; display: flex; padding: 18px 0 0 12px; gap: 9px; overflow: hidden; }
    .t { font: 29px/34px "Noto Sans CJK SC", sans-serif; font-weight: 500; white-space: nowrap; }
    .d { font: 24px/28px Inter, sans-serif; white-space: nowrap; }
    .bai { position: absolute; left: -33px; top: 8px; font: bold 40px/44px "Liberation Sans", sans-serif; color: rgba(255,255,255,.850); }
    .jing { position: absolute; left: -34px; top: 45px; font: 24px/26px "Liberation Sans", sans-serif; color: rgba(255,255,255,.900); }
    .paw { position: absolute; left: 40px; top: -12px; }
  </style><svg class="paw" width="34" height="14" fill="#f2f2f2" stroke="#ccc"><ellipse cx="8" cy="10" rx="6" ry="9"/><ellipse cx="24" cy="11" rx="7" ry="9"/></svg>
  <span class="bai">Ba</span><span class="jing">jing</span>
  <div class="card">
    <svg width="44" height="60" viewBox="0 0 44 60"><path fill="#cfcfcf" d="M3 8l5 3c2-1 5-1 6 1l4 2-1 2-5 2c-1 4 0 8 3 11 5 2 14 1 20 4 4 2 4 6 2 9l1 15h-4l-1-12-4-5c-4 2-9 1-13-1l-3 5-1 14H8l2-14-4-11C2 31 0 26 1 22l6-8z"/><path fill="none" stroke="#cfcfcf" stroke-width="1.300" d="M12 11c5-4 9 0 15 0 6 0 8-5 15-8M14 10c-2-3-2-5 1-8M19 8c-3-3-2-5 0-7M23 10c-2-3 0-5 2-8M29 10c3-1 5-3 5-6M16 8c4 0 6-3 8-6"/></svg>
    <div><div class="t">3D溜溜网</div><div class="d">3D66.COM</div></div>
  </div>`);
</script>
</body>
</html>
